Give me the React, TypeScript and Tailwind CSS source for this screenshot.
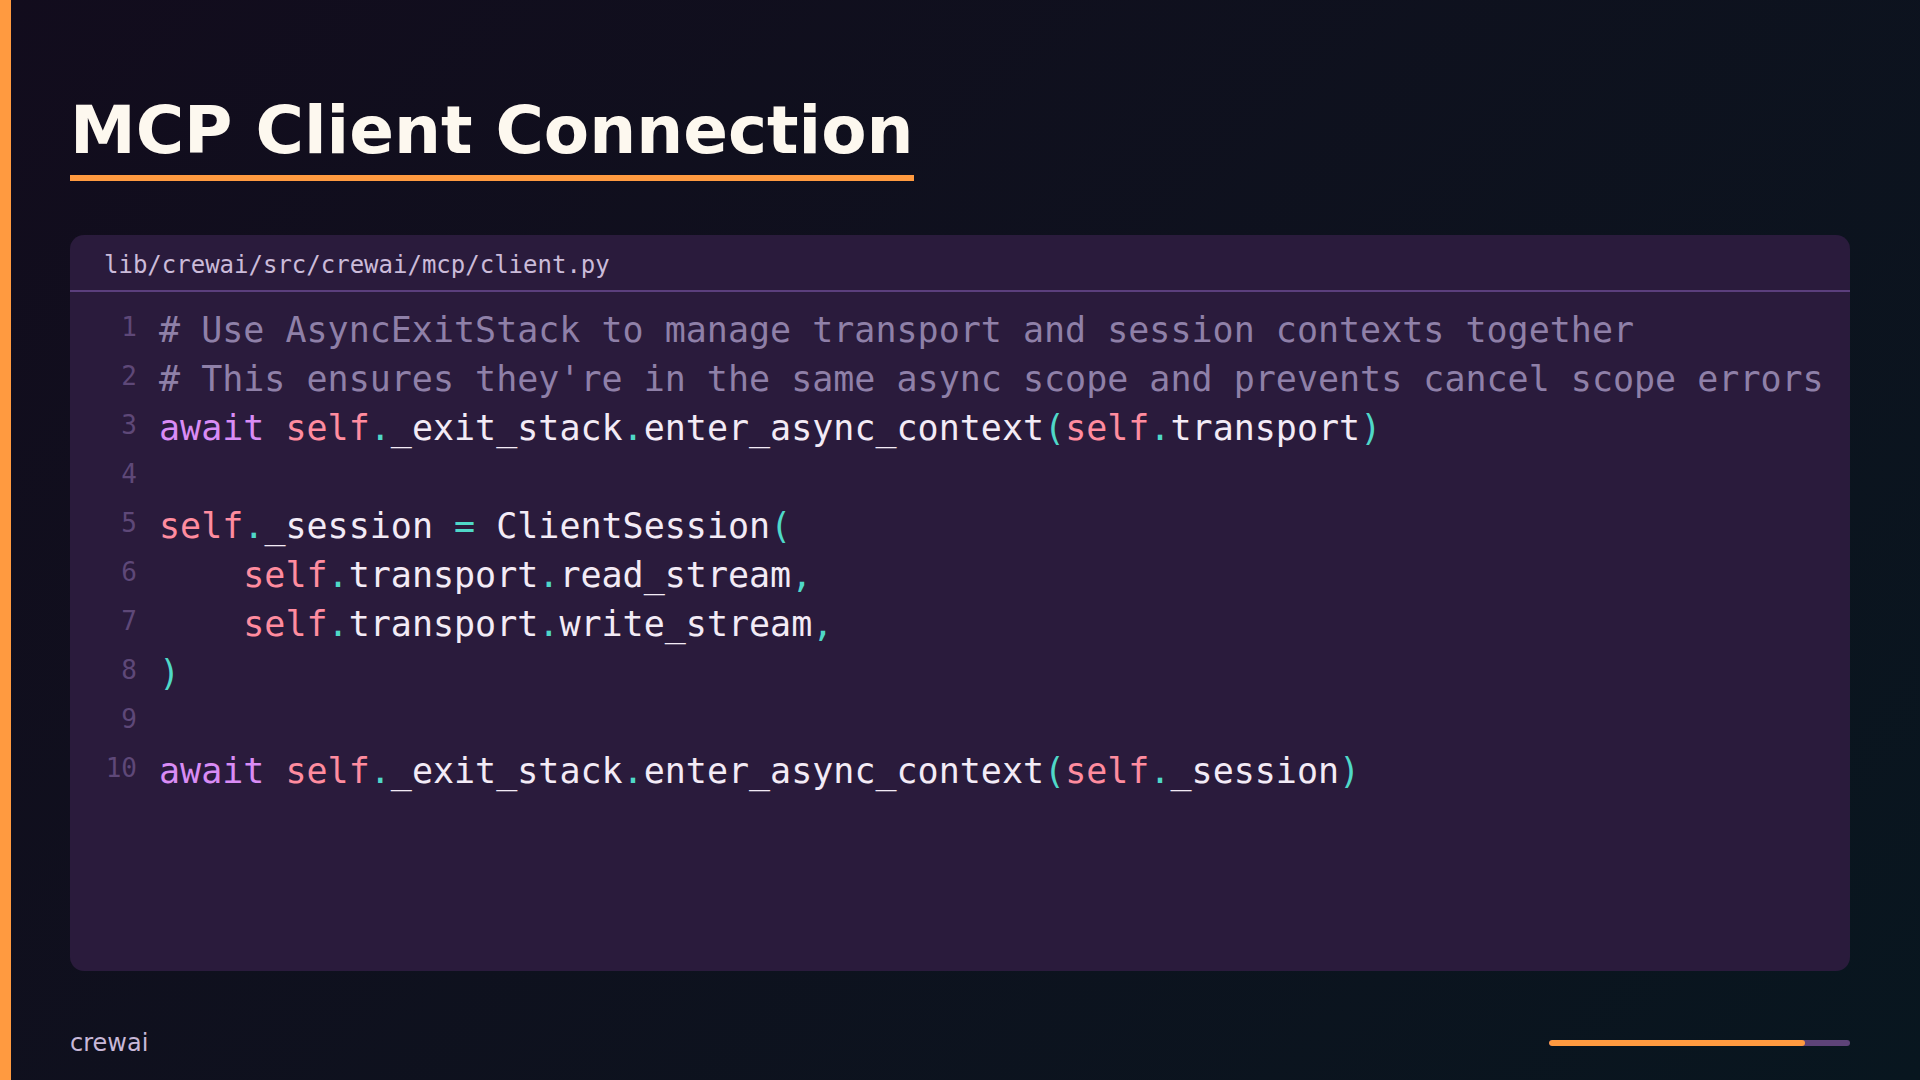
import React from 'react';

type Tok = [string, string];

const C = {
  comment: 'text-[#8f80a8]',
  kw: 'text-[#d98cf5]',
  self: 'text-[#ff8c9f]',
  punc: 'text-[#4fd8c8]',
  plain: 'text-[#f3ebf6]',
};

const lines: Tok[][] = [
  [[C.comment, '# Use AsyncExitStack to manage transport and session contexts together']],
  [[C.comment, "# This ensures they're in the same async scope and prevents cancel scope errors"]],
  [
    [C.kw, 'await'],
    [C.plain, ' '],
    [C.self, 'self'],
    [C.punc, '.'],
    [C.plain, '_exit_stack'],
    [C.punc, '.'],
    [C.plain, 'enter_async_context'],
    [C.punc, '('],
    [C.self, 'self'],
    [C.punc, '.'],
    [C.plain, 'transport'],
    [C.punc, ')'],
  ],
  [],
  [
    [C.self, 'self'],
    [C.punc, '.'],
    [C.plain, '_session '],
    [C.punc, '='],
    [C.plain, ' ClientSession'],
    [C.punc, '('],
  ],
  [
    [C.plain, '    '],
    [C.self, 'self'],
    [C.punc, '.'],
    [C.plain, 'transport'],
    [C.punc, '.'],
    [C.plain, 'read_stream'],
    [C.punc, ','],
  ],
  [
    [C.plain, '    '],
    [C.self, 'self'],
    [C.punc, '.'],
    [C.plain, 'transport'],
    [C.punc, '.'],
    [C.plain, 'write_stream'],
    [C.punc, ','],
  ],
  [[C.punc, ')']],
  [],
  [
    [C.kw, 'await'],
    [C.plain, ' '],
    [C.self, 'self'],
    [C.punc, '.'],
    [C.plain, '_exit_stack'],
    [C.punc, '.'],
    [C.plain, 'enter_async_context'],
    [C.punc, '('],
    [C.self, 'self'],
    [C.punc, '.'],
    [C.plain, '_session'],
    [C.punc, ')'],
  ],
];

const mono = "font-['DejaVu_Sans_Mono',monospace]";

const App = () => {
  return (
    <div className="flex h-[1080px] w-[1920px] overflow-hidden bg-linear-135 from-[#120c1d] to-[#08161f] font-['DejaVu_Sans',sans-serif]">
      {/* accent bar */}
      <div className="w-[11px] shrink-0 bg-[#ff9a40]" />

      <div className="flex flex-1 flex-col pl-[59px] pr-[70px] pt-[98px]">
        {/* Title */}
        <div>
          <h1 className="inline-block border-b-[6px] border-[#ff9a40] pb-[11px] text-[66px] font-bold leading-none text-[#fdf8ef]">
            MCP Client Connection
          </h1>
        </div>

        {/* Code panel */}
        <div className="mt-[54px] flex h-[736px] flex-col overflow-hidden rounded-[14px] bg-[#2a1b3c]">
          <div className={`flex h-[57px] items-center border-b-2 border-[#5b3f7d] pl-[34px] pt-[4px] text-[24px] text-[#cbbbd9] ${mono}`}>
            lib/crewai/src/crewai/mcp/client.py
          </div>
          <div className={`flex flex-col pl-[27px] pt-[14px] ${mono}`}>
            {lines.map((toks, i) => (
              <div key={i} className="flex min-h-[49px] items-start">
                <span className="w-[40px] shrink-0 text-right text-[26px] leading-[43px] text-[#5e4878]">
                  {i + 1}
                </span>
                <span className="ml-[22px] whitespace-pre text-[35px] leading-[49px]">
                  {toks.map(([cls, t], j) => (
                    <span key={j} className={cls}>
                      {t}
                    </span>
                  ))}
                </span>
              </div>
            ))}
          </div>
        </div>

        {/* Footer */}
        <div className="mt-[54px] flex items-center justify-between">
          <span className="text-[24px] leading-9 text-[#c8b8d8]">crewai</span>
          <div className="flex h-[6px] w-[301px] overflow-hidden rounded-full bg-[#5e4378]">
            <div className="h-full w-[85%] rounded-full bg-[#ff9a40]" />
          </div>
        </div>
      </div>
    </div>
  );
};

export default App;
